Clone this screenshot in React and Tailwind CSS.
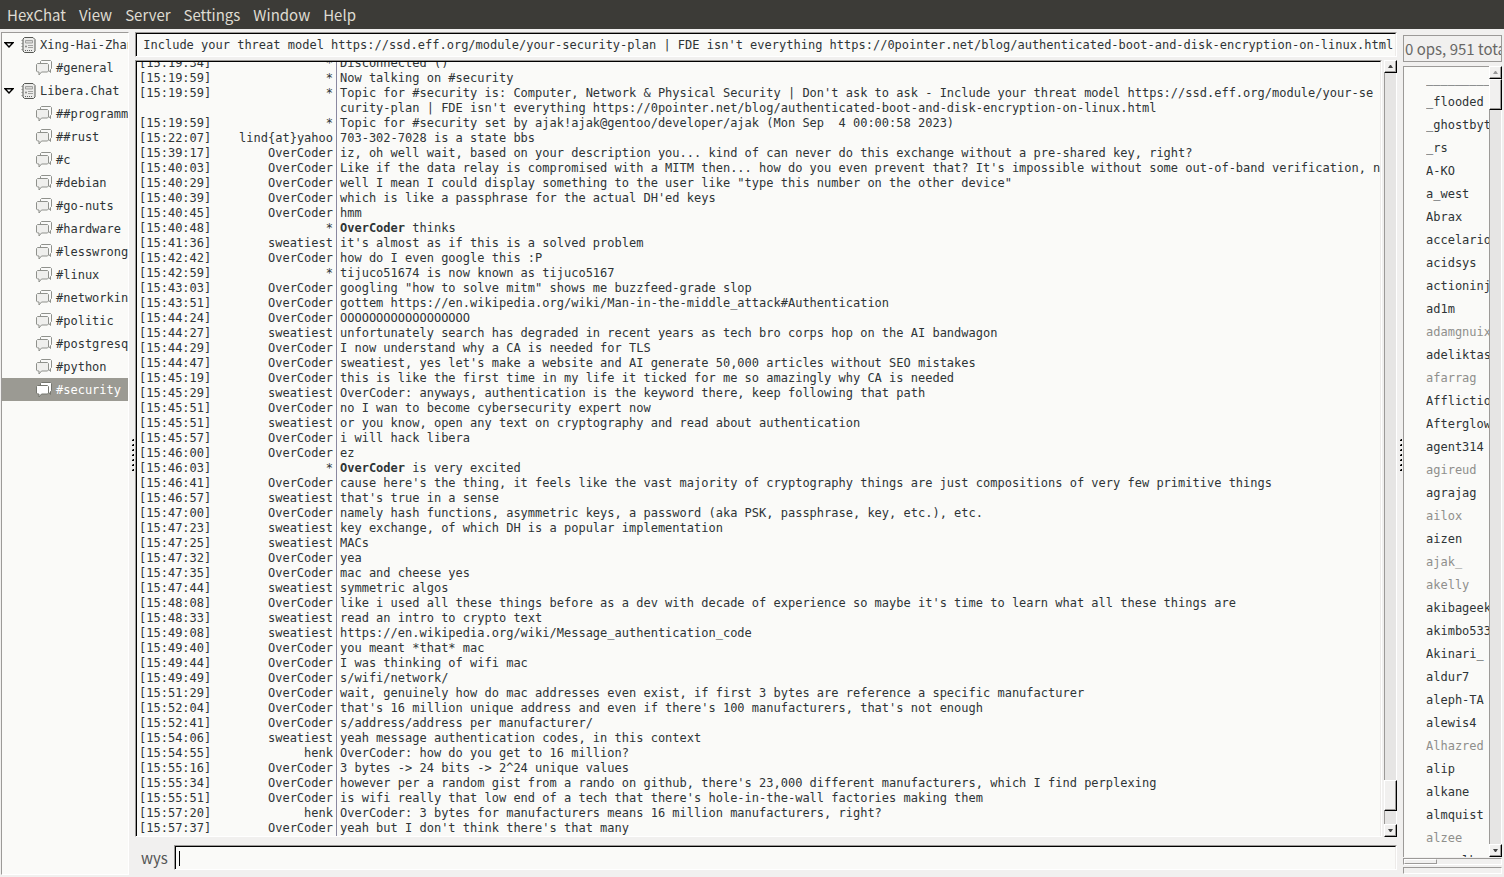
import React, { useEffect, useRef, useState } from 'react';

const MONO = 'font-["DejaVu_Sans_Mono",monospace] text-[12px]';
const SUNKEN = 'border border-t-[#9c9a98] border-l-[#9c9a98] border-r-white border-b-white';
const SUNKEN_INNER = 'border-t border-l border-r border-t-black border-l-black border-r-[#edebe9] bg-[#fafaf8]';
const RAISED = 'border border-t-white border-l-white border-r-black border-b-black bg-[#f1f0ef] shadow-[inset_-1px_-1px_0_#9c9a98]';

const networks = [
  { name: 'Xing-Hai-Zhan', channels: ['#general'] },
  {
    name: 'Libera.Chat',
    channels: [
      '##programming',
      '##rust',
      '#c',
      '#debian',
      '#go-nuts',
      '#hardware',
      '#lesswrong',
      '#linux',
      '#networking',
      '#politic',
      '#postgresql',
      '#python',
      '#security',
    ],
  },
];

const messages = [
  ['15:19:34', '*', 'Disconnected ()'],
  ['15:19:59', '*', 'Now talking on #security'],
  ['15:19:59', '*', "Topic for #security is: Computer, Network & Physical Security | Don't ask to ask - Include your threat model https://ssd.eff.org/module/your-security-plan | FDE isn't everything https://0pointer.net/blog/authenticated-boot-and-disk-encryption-on-linux.html"],
  ['15:19:59', '*', 'Topic for #security set by ajak!ajak@gentoo/developer/ajak (Mon Sep  4 00:00:58 2023)'],
  ['15:22:07', 'lind{at}yahoo', '703-302-7028 is a state bbs'],
  ['15:39:17', 'OverCoder', 'iz, oh well wait, based on your description you... kind of can never do this exchange without a pre-shared key, right?'],
  ['15:40:03', 'OverCoder', "Like if the data relay is compromised with a MITM then... how do you even prevent that? It's impossible without some out-of-band verification, no?"],
  ['15:40:29', 'OverCoder', 'well I mean I could display something to the user like "type this number on the other device"'],
  ['15:40:39', 'OverCoder', "which is like a passphrase for the actual DH'ed keys"],
  ['15:40:45', 'OverCoder', 'hmm'],
  ['15:40:48', '*', 'thinks', 'OverCoder'],
  ['15:41:36', 'sweatiest', "it's almost as if this is a solved problem"],
  ['15:42:42', 'OverCoder', 'how do I even google this :P'],
  ['15:42:59', '*', 'tijuco51674 is now known as tijuco5167'],
  ['15:43:03', 'OverCoder', 'googling "how to solve mitm" shows me buzzfeed-grade slop'],
  ['15:43:51', 'OverCoder', 'gottem https://en.wikipedia.org/wiki/Man-in-the-middle_attack#Authentication'],
  ['15:44:24', 'OverCoder', 'OOOOOOOOOOOOOOOOOO'],
  ['15:44:27', 'sweatiest', 'unfortunately search has degraded in recent years as tech bro corps hop on the AI bandwagon'],
  ['15:44:29', 'OverCoder', 'I now understand why a CA is needed for TLS'],
  ['15:44:47', 'OverCoder', "sweatiest, yes let's make a website and AI generate 50,000 articles without SEO mistakes"],
  ['15:45:19', 'OverCoder', 'this is like the first time in my life it ticked for me so amazingly why CA is needed'],
  ['15:45:29', 'sweatiest', 'OverCoder: anyways, authentication is the keyword there, keep following that path'],
  ['15:45:51', 'OverCoder', 'no I wan to become cybersecurity expert now'],
  ['15:45:51', 'sweatiest', 'or you know, open any text on cryptography and read about authentication'],
  ['15:45:57', 'OverCoder', 'i will hack libera'],
  ['15:46:00', 'OverCoder', 'ez'],
  ['15:46:03', '*', 'is very excited', 'OverCoder'],
  ['15:46:41', 'OverCoder', "cause here's the thing, it feels like the vast majority of cryptography things are just compositions of very few primitive things"],
  ['15:46:57', 'sweatiest', "that's true in a sense"],
  ['15:47:00', 'OverCoder', 'namely hash functions, asymmetric keys, a password (aka PSK, passphrase, key, etc.), etc.'],
  ['15:47:23', 'sweatiest', 'key exchange, of which DH is a popular implementation'],
  ['15:47:25', 'sweatiest', 'MACs'],
  ['15:47:32', 'OverCoder', 'yea'],
  ['15:47:35', 'OverCoder', 'mac and cheese yes'],
  ['15:47:44', 'sweatiest', 'symmetric algos'],
  ['15:48:08', 'OverCoder', "like i used all these things before as a dev with decade of experience so maybe it's time to learn what all these things are"],
  ['15:48:33', 'sweatiest', 'read an intro to crypto text'],
  ['15:49:08', 'sweatiest', 'https://en.wikipedia.org/wiki/Message_authentication_code'],
  ['15:49:40', 'OverCoder', 'you meant *that* mac'],
  ['15:49:44', 'OverCoder', 'I was thinking of wifi mac'],
  ['15:49:49', 'OverCoder', 's/wifi/network/'],
  ['15:51:29', 'OverCoder', 'wait, genuinely how do mac addresses even exist, if first 3 bytes are reference a specific manufacturer'],
  ['15:52:04', 'OverCoder', "that's 16 million unique address and even if there's 100 manufacturers, that's not enough"],
  ['15:52:41', 'OverCoder', 's/address/address per manufacturer/'],
  ['15:54:06', 'sweatiest', 'yeah message authentication codes, in this context'],
  ['15:54:55', 'henk', 'OverCoder: how do you get to 16 million?'],
  ['15:55:16', 'OverCoder', '3 bytes -> 24 bits -> 2^24 unique values'],
  ['15:55:34', 'OverCoder', "however per a random gist from a rando on github, there's 23,000 different manufacturers, which I find perplexing"],
  ['15:55:51', 'OverCoder', "is wifi really that low end of a tech that there's hole-in-the-wall factories making them"],
  ['15:57:20', 'henk', 'OverCoder: 3 bytes for manufacturers means 16 million manufacturers, right?'],
  ['15:57:37', 'OverCoder', "yeah but I don't think there's that many"],
];

const users = [
  '__________', '_flooded', '_ghostbyte', '_rs', 'A-KO', 'a_west', 'Abrax', 'accelarion', 'acidsys',
  'actioninja', 'ad1m', 'adamgnuix', 'adeliktas', 'afarrag', 'Affliction', 'Afterglow', 'agent314',
  'agireud', 'agrajag', 'ailox', 'aizen', 'ajak_', 'akelly', 'akibageek', 'akimbo533', 'Akinari_',
  'aldur7', 'aleph-TA', 'alewis4', 'Alhazred', 'alip', 'alkane', 'almquist', 'alzee', 'ameralk',
];

const away = ['adamgnuix', 'afarrag', 'agireud', 'ailox', 'ajak_', 'akelly', 'Alhazred', 'alzee'];

const topicText =
  "Computer, Network & Physical Security | Don't ask to ask - Include your threat model https://ssd.eff.org/module/your-security-plan | FDE isn't everything https://0pointer.net/blog/authenticated-boot-and-disk-encryption-on-linux.html";

function ServerIcon() {
  return (
    <svg width="16" height="16" viewBox="0 0 16 16" className="shrink-0" aria-hidden="true">
      <path d="M0 3.500h2M0 6.500h2M0 9.500h2M0 12.500h2" stroke="#c4c4c1" />
      <path d="M3.500.5h8.500l2 2v11.500l-1.500 1.500h-9l-1.500-1.500v-12z" fill="#ececea" stroke="#555753" />
      <path d="M4.500 3.500h7v2.500h-7z" fill="#d8d8d6" stroke="#a2a2a0" />
      <circle cx="5" cy="9.500" r="1" fill="#858582" />
      <path d="M7 8.500h5M7 10.500h5" stroke="#a2a2a0" />
      <path d="M4 13.500h1M6 13.500h1M8 13.500h1M10 13.500h1" stroke="#666" />
    </svg>
  );
}

function ChannelIcon({ active }) {
  const stroke = active ? '#75766f' : '#8f918c';
  return (
    <svg width="16" height="16" viewBox="0 0 16 16" className="shrink-0" aria-hidden="true">
      <path d="M5.500.5h9l1 1v7l-1 1v3l-2.500-3h-6.500l-1-1v-7z" fill={active ? '#fff' : '#fafaf9'} stroke={stroke} />
      <path d="M1.500 3.500h10l1 1v6.500l-1 1h-6l-2.500 3v-3h-1.500l-1-1v-6.500z" fill={active ? '#fff' : '#efefed'} stroke={stroke} />
    </svg>
  );
}

function Arrow({ up }) {
  return (
    <svg width="5" height="3" viewBox="0 0 5 3" aria-hidden="true">
      <path d={up ? 'M0 3L2 0h1L5 3z' : 'M0 0L2 3h1L5 0z'} fill="currentColor" />
    </svg>
  );
}

function Scrollbar({ atEnd }) {
  const trough = 'border-l border-r border-l-[#9c9a98] border-r-white bg-[#e6e5e4]';
  return (
    <div className="flex w-[13px] shrink-0 flex-col">
      <button
        aria-label="Scroll up"
        className={`flex h-[13px] shrink-0 items-center justify-center ${RAISED} ${atEnd ? 'text-[#444]' : 'text-[#999]'}`}
      >
        <Arrow up />
      </button>
      {atEnd && <div className={`grow ${trough}`} />}
      <div className={`h-[31px] shrink-0 ${RAISED}`} />
      <div className={`${atEnd ? 'h-[13px] shrink-0' : 'grow'} ${trough}`} />
      <button
        aria-label="Scroll down"
        className={`flex h-[13px] shrink-0 items-center justify-center text-[#444] ${RAISED}`}
      >
        <Arrow />
      </button>
    </div>
  );
}

function Handle() {
  return (
    <div className="flex w-[6px] shrink-0 flex-col items-end justify-center gap-[3px] pt-[4px] pr-px">
      {[0, 1, 2, 3, 4, 5, 6].map((n) => (
        <span key={n} className="size-[2px] border-r border-b border-black bg-[#9c9a98]" />
      ))}
    </div>
  );
}

function MenuBar() {
  return (
    <nav className="flex h-[29px] shrink-0 items-center gap-[13px] bg-[#3c3b37] px-[7px] pt-[2px] text-[15px] text-[#dfdbd2]">
      {['HexChat', 'View', 'Server', 'Settings', 'Window', 'Help'].map((item) => (
        <button key={item}>{item}</button>
      ))}
    </nav>
  );
}

function ChannelTree({ current, onSelect }) {
  return (
    <aside className={`${MONO} ${SUNKEN} ml-px mt-[3px] mb-[2px] w-[128px] shrink-0 overflow-hidden bg-[#fafaf8]`}>
      {networks.map((net) => (
        <div key={net.name}>
          <button className="flex h-[23px] w-full items-center overflow-hidden pl-[2px] whitespace-nowrap">
            <svg width="10" height="6" viewBox="0 0 10 6" className="mr-[7px] shrink-0" aria-hidden="true">
              <path d="M1 .7h8L5 5z" fill="#fff" stroke="#000" strokeWidth="1.4" />
            </svg>
            <ServerIcon />
            <span className="ml-[3px]">{net.name}</span>
          </button>
          {net.channels.map((name) => (
            <button
              key={name}
              onClick={() => onSelect(name)}
              className={`flex h-[23px] w-full items-center gap-1 overflow-hidden pl-[34px] whitespace-nowrap ${
                name === current ? 'bg-[#9b9a93] text-white' : ''
              }`}
            >
              <ChannelIcon active={name === current} />
              {name}
            </button>
          ))}
        </div>
      ))}
    </aside>
  );
}

function ChatLog() {
  return (
    <div className="mt-[3px] flex min-h-0 grow gap-[2px]">
      <div className={`${SUNKEN} flex min-w-0 grow flex-col`}>
        <ol className={`${MONO} ${SUNKEN_INNER} flex min-h-0 grow flex-col justify-end overflow-hidden leading-[15px]`}>
          {messages.map(([time, nick, text, actor], i) => (
            <li key={i} className="flex shrink-0 pl-[2px]">
              <span className="w-[84px] shrink-0">[{time}]</span>
              <span className="w-[110px] shrink-0 text-right">{nick}</span>
              {/* only texts well past one line are wrapped */}
              <span
                className={`ml-[3px] min-w-0 grow border-l border-[#8a88a0] pl-[3px] ${
                  text.length > 148 ? 'break-all whitespace-pre-wrap' : 'whitespace-pre'
                }`}
              >
                {actor && <b>{actor} </b>}
                {text}
              </span>
            </li>
          ))}
        </ol>
      </div>
      <Scrollbar atEnd />
    </div>
  );
}

function UserList() {
  return (
    <aside className="mr-[2px] flex w-[99px] shrink-0 flex-col pt-[6px]">
      <div className="h-[27px] shrink-0 overflow-hidden border border-[#9c9a98] pl-px text-[15px] leading-[26px] whitespace-nowrap text-[#696866]">
        0 ops, 951 total
      </div>
      <div className="mt-[4px] flex min-h-0 grow">
        <ul className={`${MONO} min-w-0 grow overflow-hidden border-t border-l border-[#9c9a98] bg-[#fafaf8] pt-px pl-[22px] leading-[23px]`}>
          {users.map((name) => (
            <li key={name} className={`overflow-hidden whitespace-nowrap ${away.includes(name) ? 'text-[#8f8f8c]' : ''}`}>
              {name}
            </li>
          ))}
        </ul>
        <Scrollbar />
      </div>
      <div className={`mt-px h-[7px] shrink-0 ${SUNKEN}`}>
        <div className="h-[5px] w-[33px] border border-t-white border-l-white border-r-[#9c9a98] border-b-[#9c9a98]" />
      </div>
      <div className={`mt-[2px] mb-[3px] h-[7px] shrink-0 ${SUNKEN}`} />
    </aside>
  );
}

export default function App() {
  const [current, setCurrent] = useState('#security');
  const [topic, setTopic] = useState(topicText);
  const [draft, setDraft] = useState('');
  const topicRef = useRef(null);

  // keep the end of a long topic in view
  useEffect(() => {
    topicRef.current.scrollLeft = topicRef.current.scrollWidth;
  }, []);

  return (
    <div className='flex h-screen flex-col overflow-hidden bg-[#f1f0ef] font-["Noto_Sans_CJK_SC",sans-serif] text-[#2e3436]'>
      <MenuBar />
      <div className="flex min-h-0 grow">
        <ChannelTree current={current} onSelect={setCurrent} />
        <Handle />
        <main className="flex min-w-0 grow flex-col pt-[3px]">
          <div className={`h-[25px] shrink-0 ${SUNKEN}`}>
            <input
              ref={topicRef}
              aria-label="Topic"
              value={topic}
              onChange={(e) => setTopic(e.target.value)}
              className={`${MONO} ${SUNKEN_INNER} block h-[23px] w-full px-[2px] outline-none`}
            />
          </div>
          <ChatLog />
          <div className="mt-[8px] mb-[7px] flex h-[25px] shrink-0 items-center">
            <label htmlFor="message" className="w-[39px] shrink-0 pt-[2px] pl-[6px] text-[15px] text-[#555]">
              wys
            </label>
            <div className={`h-[25px] grow ${SUNKEN}`}>
              <div className={`flex h-[23px] items-center pl-[3px] ${SUNKEN_INNER}`}>
                <span className="h-[15px] w-px bg-black" />
                <input
                  id="message"
                  value={draft}
                  onChange={(e) => setDraft(e.target.value)}
                  className={`${MONO} h-full grow outline-none`}
                />
              </div>
            </div>
          </div>
        </main>
        <Handle />
        <UserList />
      </div>
    </div>
  );
}
